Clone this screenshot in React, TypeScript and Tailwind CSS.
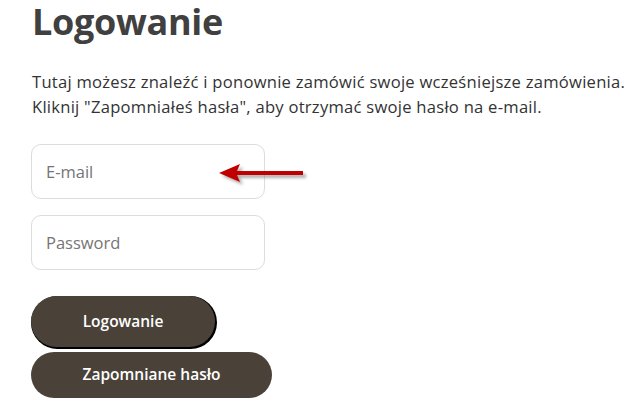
import React from "react";

const font = { fontFamily: "'Open Sans', 'DejaVu Sans', sans-serif" };

function Arrow() {
  return (
    <svg className="absolute left-[212px] top-[160px]" width="100" height="30" viewBox="0 0 100 30">
      <defs>
        <filter id="sh" x="-20%" y="-50%" width="140%" height="200%">
          <feGaussianBlur stdDeviation="1.6" />
        </filter>
      </defs>
      <g transform="translate(3 3)" fill="#7a7a7a" opacity="0.6" filter="url(#sh)">
        <polygon points="7,13 28,4 25,11 91,11 91,15 25,15 28,22" />
      </g>
      <polygon points="7,13 28,4 25,11 91,11 91,15 25,15 28,22" fill="#c00000" />
    </svg>
  );
}

export default function App() {
  return (
    <div className="relative min-h-[408px] bg-white pl-[32px] pr-[8px]" style={font}>
      <h1 className="text-[36px] font-bold leading-[44px] tracking-[-0.3px] text-[#404040]">Logowanie</h1>
      <p className="mt-[25px] whitespace-nowrap text-[16.6px] leading-[25px] tracking-[0.25px] text-[#333]">
        Tutaj możesz znaleźć i ponownie zamówić swoje wcześniejsze zamówienia.
        <br />
        Kliknij "Zapomniałeś hasła", aby otrzymać swoje hasło na e-mail.
      </p>
      <div className="mt-[25px] flex flex-col gap-[16px]">
        <input
          className="-ml-px h-[55px] w-[234px] rounded-[10px] border border-[#dcdcdc] px-[14px] text-[16.5px] text-[#333] outline-none placeholder:text-[#757575]"
          placeholder="E-mail"
        />
        <input
          type="password"
          className="-ml-px h-[55px] w-[234px] rounded-[10px] border border-[#dcdcdc] px-[14px] text-[16.5px] text-[#333] outline-none placeholder:text-[#757575]"
          placeholder="Password"
        />
      </div>
      <div className="mt-[26px] flex flex-col items-start gap-[5px]">
        <button
          type="button"
          className="-ml-px h-[51px] w-[184px] rounded-full bg-[#4a4239] text-[15.5px] font-semibold text-white shadow-[1px_1px_0_1px_#000]"
        >
          Logowanie
        </button>
        <button
          type="button"
          className="-ml-px h-[46px] w-[241px] rounded-full bg-[#4a4239] text-[15.5px] font-semibold text-white"
        >
          Zapomniane hasło
        </button>
      </div>
      <Arrow />
    </div>
  );
}
